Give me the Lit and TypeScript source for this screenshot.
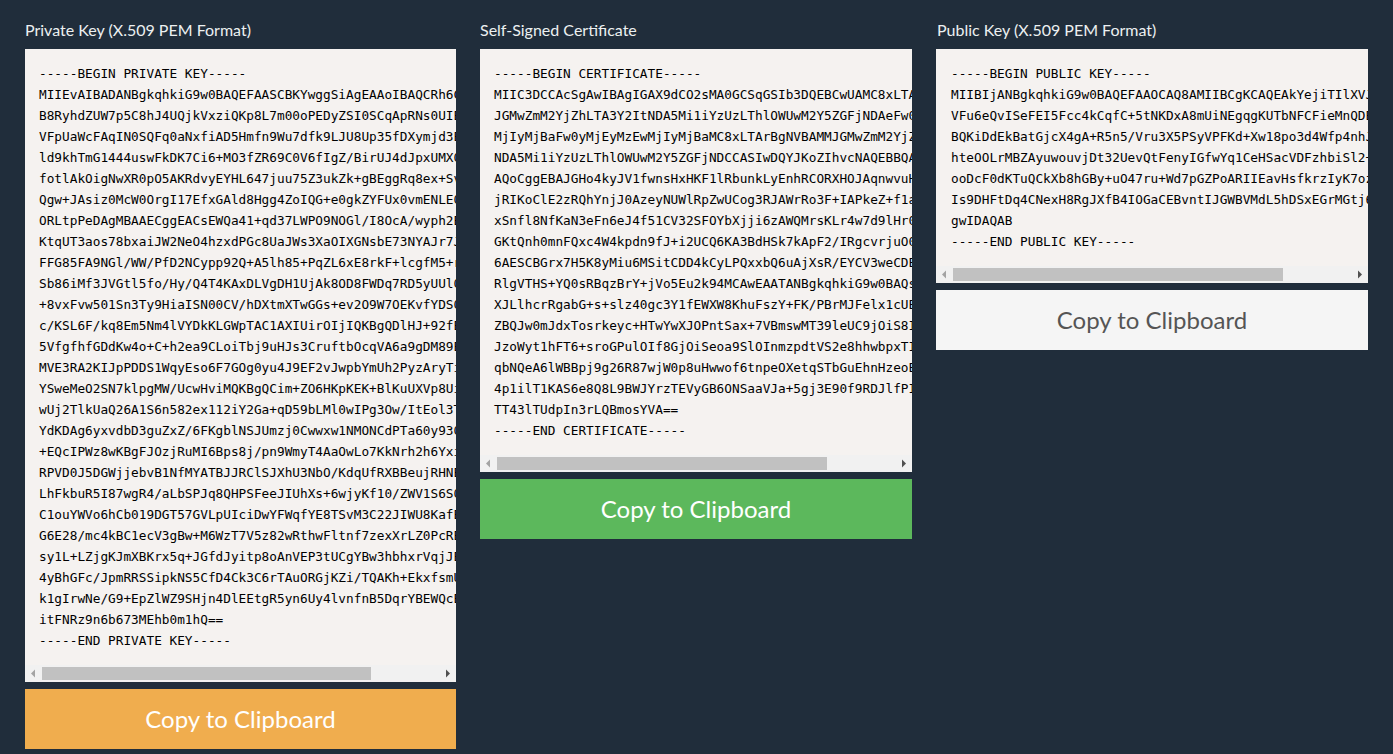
import { LitElement, html, css } from "lit";
import { customElement } from "lit/decorators.js";

const PRIVATE = `-----BEGIN PRIVATE KEY-----
MIIEvAIBADANBgkqhkiG9w0BAQEFAASCBKYwggSiAgEAAoIBAQCRh6C
B8RyhdZUW7p5C8hJ4UQjkVxziQKp8L7m00oPEDyZSI0SCqApRNs0UIE
VFpUaWcFAqIN0SQFq0aNxfiAD5Hmfn9Wu7dfk9LJU8Up35fDXymjd3E
ld9khTmG1444uswFkDK7Ci6+MO3fZR69C0V6fIgZ/BirUJ4dJpxUMX0
fotlAkOigNwXR0pO5AKRdvyEYHL647juu75Z3ukZk+gBEggRq8ex+Sv
Qgw+JAsiz0McW0OrgI17EfxGAld8Hgg4ZoIQG+e0gkZYFUx0vmENLE0
ORLtpPeDAgMBAAECggEACsEWQa41+qd37LWPO9NOGl/I8OcA/wyph2E
KtqUT3aos78bxaiJW2NeO4hzxdPGc8UaJWs3XaOIXGNsbE73NYAJr7J
FFG85FA9NGl/WW/PfD2NCypp92Q+A5lh85+PqZL6xE8rkF+lcgfM5+r
Sb86iMf3JVGtl5fo/Hy/Q4T4KAxDLVgDH1UjAk8OD8FWDq7RD5yUUl0
+8vxFvw501Sn3Ty9HiaISN00CV/hDXtmXTwGGs+ev2O9W7OEKvfYDS0
c/KSL6F/kq8Em5Nm4lVYDkKLGWpTAC1AXIUirOIjIQKBgQDlHJ+92fE
5VfgfhfGDdKw4o+C+h2ea9CLoiTbj9uHJs3CruftbOcqVA6a9gDM89E
MVE3RA2KIJpPDDS1WqyEso6F7GOg0yu4J9EF2vJwpbYmUh2PyzAryTi
YSweMeO2SN7klpgMW/UcwHviMQKBgQCim+ZO6HKpKEK+BlKuUXVp8Ui
wUj2TlkUaQ26A1S6n582ex112iY2Ga+qD59bLMl0wIPg3Ow/ItEol3T
YdKDAg6yxvdbD3guZxZ/6FKgblNSJUmzj0Cwwxw1NMONCdPTa60y930
+EQcIPWz8wKBgFJOzjRuMI6Bps8j/pn9WmyT4AaOwLo7KkNrh2h6Yxi
RPVD0J5DGWjjebvB1NfMYATBJJRClSJXhU3NbO/KdqUfRXBBeujRHNE
LhFkbuR5I87wgR4/aLbSPJq8QHPSFeeJIUhXs+6wjyKf10/ZWV1S6S0
C1ouYWVo6hCb019DGT57GVLpUIciDwYFWqfYE8TSvM3C22JIWU8KafE
G6E28/mc4kBC1ecV3gBw+M6WzT7V5z82wRthwFltnf7zexXrLZ0PcRE
sy1L+LZjgKJmXBKrx5q+JGfdJyitp8oAnVEP3tUCgYBw3hbhxrVqjJE
4yBhGFc/JpmRRSSipkNS5CfD4Ck3C6rTAuORGjKZi/TQAKh+EkxfsmU
k1gIrwNe/G9+EpZlWZ9SHjn4DlEEtgR5yn6Uy4lvnfnB5DqrYBEWQcE
itFNRz9n6b673MEhb0m1hQ==
-----END PRIVATE KEY-----`;

const CERT = `-----BEGIN CERTIFICATE-----
MIIC3DCCAcSgAwIBAgIGAX9dCO2sMA0GCSqGSIb3DQEBCwUAMC8xLTA
JGMwZmM2YjZhLTA3Y2ItNDA5Mi1iYzUzLThlOWUwM2Y5ZGFjNDAeFw0
MjIyMjBaFw0yMjEyMzEwMjIyMjBaMC8xLTArBgNVBAMMJGMwZmM2YjZ
NDA5Mi1iYzUzLThlOWUwM2Y5ZGFjNDCCASIwDQYJKoZIhvcNAQEBBQA
AQoCggEBAJGHo4kyJV1fwnsHxHKF1lRbunkLyEnhRCORXHOJAqnwvuH
jRIKoClE2zRQhYnjJ0AzeyNUWlRpZwUCog3RJAWrRo3F+IAPkeZ+f1a
xSnfl8NfKaN3eFn6eJ4f51CV32SFOYbXjji6zAWQMrsKLr4w7d9lHr0
GKtQnh0mnFQxc4W4kpdn9fJ+i2UCQ6KA3BdHSk7kApF2/IRgcvrjuO0
6AESCBGrx7H5K8yMiu6MSitCDD4kCyLPQxxbQ6uAjXsR/EYCV3weCDE
RlgVTHS+YQ0sRBqzBrY+jVo5Eu2k94MCAwEAATANBgkqhkiG9w0BAQs
XJLlhcrRgabG+s+slz40gc3Y1fEWXW8KhuFszY+FK/PBrMJFelx1cUE
ZBQJw0mJdxTosrkeyc+HTwYwXJOPntSax+7VBmswMT39leUC9jOiS8I
JzoWyt1hFT6+sroGPulOIf8GjOiSeoa9SlOInmzpdtVS2e8hhwbpxTI
qbNQeA6lWBBpj9g26R87wjW0p8uHwwof6tnpeOXetqSTbGuEhnHzeoE
4p1ilT1KAS6e8Q8L9BWJYrzTEVyGB6ONSaaVJa+5gj3E90f9RDJlfPI
TT43lTUdpIn3rLQBmosYVA==
-----END CERTIFICATE-----`;

const PUBLIC = `-----BEGIN PUBLIC KEY-----
MIIBIjANBgkqhkiG9w0BAQEFAAOCAQ8AMIIBCgKCAQEAkYejiTIlXVJ
VFu6eQvISeFEI5Fcc4kCqfC+5tNKDxA8mUiNEgqgKUTbNFCFieMnQDE
BQKiDdEkBatGjcX4gA+R5n5/Vru3X5PSyVPFKd+Xw18po3d4Wfp4nhJ
hteOOLrMBZAyuwouvjDt32UevQtFenyIGfwYq1CeHSacVDFzhbiSl2+
ooDcF0dKTuQCkXb8hGBy+uO47ru+Wd7pGZPoARIIEavHsfkrzIyK7oz
Is9DHFtDq4CNexH8RgJXfB4IOGaCEBvntIJGWBVMdL5hDSxEGrMGtj6
gwIDAQAB
-----END PUBLIC KEY-----`;

@customElement("app-root")
export class AppRoot extends LitElement {
  static styles = css`
    :host {
      display: block;
      min-height: 754px;
      background: #202d3b;
      font-family: Lato, sans-serif;
    }
    .grid {
      display: grid;
      grid-template-columns: 431px 432px 432px;
      gap: 24px;
      align-items: start;
      padding: 20px 25px 0;
    }
    .label {
      height: 29px;
      color: #ecf0f1;
      font-size: 16px;
      line-height: 19px;
    }
    .code {
      overflow: hidden;
      background: #f5f2f0;
    }
    pre {
      box-sizing: border-box;
      width: 520px;
      margin: 0;
      padding: 14px;
      color: #000;
      font-family: "DejaVu Sans Mono", monospace;
      font-size: 12.75px;
      line-height: 21px;
    }
    .third .label {
      padding-left: 1px;
    }
    .third pre {
      padding-left: 15px;
    }
    .scrollbar {
      display: flex;
      height: 17px;
      background: #f1f1f1;
    }
    .arrow {
      flex: none;
      display: block;
      width: 17px;
      height: 17px;
    }
    .arrow.left {
      fill: #a3a3a3;
    }
    .arrow.right {
      fill: #505050;
      margin-left: auto;
    }
    .thumb {
      width: calc((100% - 34px) * 0.8295);
      height: 13px;
      margin-top: 2px;
      background: #c1c1c1;
    }
    .btn {
      display: block;
      box-sizing: border-box;
      width: 100%;
      height: 60px;
      margin-top: 7px;
      border: 0;
      padding: 0 0 2px;
      font-family: Lato, sans-serif;
      font-size: 24px;
      cursor: pointer;
    }
    .warning {
      background: #f0ad4e;
      color: #fff;
    }
    .success {
      background: #5cb85c;
      color: #fff;
    }
    .plain {
      background: #f5f5f5;
      color: #555;
    }
  `;

  private block(title: string, text: string, kind: string, extra = "") {
    return html`
      <section class=${extra}>
        <div class="label">${title}</div>
        <div class="code"><pre>${text}</pre></div>
        <div class="scrollbar">
          <svg class="arrow left" viewBox="0 0 17 17"><polygon points="10,4.5 6,8.5 10,12.5"></polygon></svg>
          <div class="thumb"></div>
          <svg class="arrow right" viewBox="0 0 17 17"><polygon points="7,4.5 11,8.5 7,12.5"></polygon></svg>
        </div>
        <button class="btn ${kind}">Copy to Clipboard</button>
      </section>
    `;
  }

  render() {
    return html`
      <div class="grid">
        ${this.block("Private Key (X.509 PEM Format)", PRIVATE, "warning")}
        ${this.block("Self-Signed Certificate", CERT, "success")}
        ${this.block("Public Key (X.509 PEM Format)", PUBLIC, "plain", "third")}
      </div>
    `;
  }
}
